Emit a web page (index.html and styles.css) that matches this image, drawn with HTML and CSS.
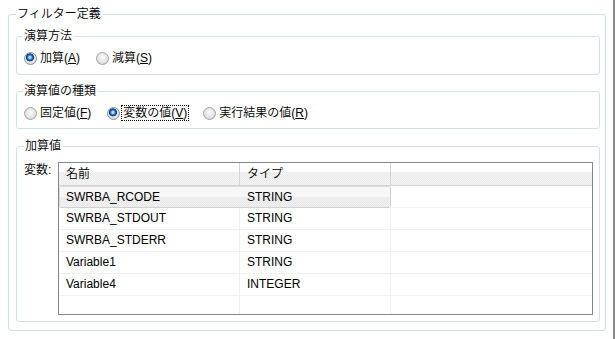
FILE: index.html
```html
<!DOCTYPE html>
<html>
<head>
  <meta charset="utf-8">
  <link rel="stylesheet" href="styles.css">
</head>
<body>
  <div class="window">
    <fieldset class="group outer">
      <legend>フィルター定義</legend>

      <fieldset class="group sub method">
        <legend>演算方法</legend>
        <div class="options">
          <label class="opt"><span class="dot on"></span><span class="text">加算(<u>A</u>)</span></label>
          <label class="opt"><span class="dot"></span><span class="text">減算(<u>S</u>)</span></label>
        </div>
      </fieldset>

      <fieldset class="group sub kind">
        <legend>演算値の種類</legend>
        <div class="options">
          <label class="opt"><span class="dot"></span><span class="text">固定値(<u>F</u>)</span></label>
          <label class="opt"><span class="dot on"></span><span class="text focus">変数の値(<u>V</u>)</span></label>
          <label class="opt"><span class="dot"></span><span class="text">実行結果の値(<u>R</u>)</span></label>
        </div>
      </fieldset>

      <fieldset class="group sub value">
        <legend>加算値</legend>
        <div class="var-row">
          <span class="var-label">変数:</span>
          <div class="list">
            <div class="row head">
              <div class="cell">名前</div>
              <div class="cell">タイプ</div>
              <div class="cell"></div>
            </div>
            <div class="row selected">
              <div class="cell first">SWRBA_RCODE</div>
              <div class="cell second">STRING</div>
              <div class="cell"></div>
            </div>
            <div class="row">
              <div class="cell">SWRBA_STDOUT</div>
              <div class="cell">STRING</div>
              <div class="cell"></div>
            </div>
            <div class="row">
              <div class="cell">SWRBA_STDERR</div>
              <div class="cell">STRING</div>
              <div class="cell"></div>
            </div>
            <div class="row">
              <div class="cell">Variable1</div>
              <div class="cell">STRING</div>
              <div class="cell"></div>
            </div>
            <div class="row">
              <div class="cell">Variable4</div>
              <div class="cell">INTEGER</div>
              <div class="cell"></div>
            </div>
            <div class="row filler">
              <div class="cell"></div>
              <div class="cell"></div>
              <div class="cell"></div>
            </div>
          </div>
        </div>
      </fieldset>
    </fieldset>
  </div>
</body>
</html>
```

FILE: styles.css
```css
body {
  margin: 0;
  background: #fff;
  color: #000;
  font: 350 12px/14px "Liberation Sans", "Noto Sans CJK JP", sans-serif;
}
.window {
  width: 615px;
  height: 339px;
  box-sizing: border-box;
  padding: 7px 0 0 8px;
  border-right: 2px solid #8a8a8a;
}
fieldset.group {
  margin: 0;
  min-width: 0;
  border: 1px solid #d5dfe5;
  border-radius: 3px;
  box-sizing: border-box;
}
fieldset.group legend {
  padding: 0 2px 0 1px;
  line-height: 14px;
}
.outer {
  width: 598px;
  padding: 0 5px 8px 7px;
}
.sub {
  padding: 0 6px 0 6px;
}
.method {
  margin-top: 8px !important;
  padding-top: 7px;
  padding-bottom: 8px;
}
.kind {
  margin-top: 9px !important;
  padding-top: 7px;
  padding-bottom: 7px;
}
.value {
  margin-top: 10px !important;
  padding: 9px 6px 6px 7px;
}

/* radio rows */
.options {
  display: flex;
  align-items: center;
  padding-left: 1px;
}
.opt {
  display: flex;
  align-items: center;
  gap: 1px;
  margin-right: 14px;
}
.text {
  padding: 0 1px;
  border: 1px dotted transparent;
}
.text.focus {
  border-color: #000;
}
.dot {
  width: 13px;
  height: 13px;
  box-sizing: border-box;
  border-radius: 50%;
  border: 1px solid #a3a3a3;
  background: radial-gradient(circle at 50% 40%, #fbfbfb, #e2e2e2 60%, #cdcdcd);
}
.dot.on {
  border-color: #8a8f96;
  background:
    radial-gradient(circle at 45% 40%, #b6e2ff 0 1px, #3a8be0 2px, #1254b4 3px, #0d3a7c 3.8px, transparent 4.3px),
    radial-gradient(circle at 50% 40%, #fbfbfb, #e2e2e2 60%, #cdcdcd);
}

/* variable list */
.var-row {
  display: flex;
  align-items: flex-start;
}
.var-label {
  width: 34px;
  margin-top: 1px;
}
.list {
  width: 535px;
  height: 153px;
  box-sizing: border-box;
  border: 1px solid #828790;
  display: flex;
  flex-direction: column;
}
.row {
  display: grid;
  grid-template-columns: 181px 151px 1fr;
  height: 22px;
}
.cell {
  box-sizing: border-box;
  padding-left: 7px;
  line-height: 21px;
  white-space: nowrap;
  border-right: 1px solid #f0f0f0;
  border-bottom: 1px solid #f0f0f0;
}
.row .cell:last-child {
  border-right: none;
}
.head {
  height: 23px;
}
.head .cell {
  line-height: 22px;
  border-right: 1px solid #d5d5d5;
  border-bottom: 1px solid #d5d5d5;
  background:
    linear-gradient(#fff 0 9px, transparent 9px),
    repeating-conic-gradient(#e9e9e9 0 25%, #f6f6f6 0 50%) 0 0 / 2px 2px;
}
.selected .first,
.selected .second {
  border-top: 1px solid #dadada;
  border-bottom: 1px solid #d0d0d0;
  line-height: 20px;
  background:
    linear-gradient(#f7f7f7 0 10px, transparent 10px),
    repeating-conic-gradient(#e6e6e6 0 25%, #f3f3f3 0 50%) 0 0 / 2px 2px;
}
.selected .first {
  border-left: 1px solid #dadada;
  border-right: none;
  border-radius: 2px 0 0 2px;
  padding-left: 6px;
}
.selected .second {
  border-right: 1px solid #cfcfcf;
  border-radius: 0 2px 2px 0;
}
.filler {
  flex: 1;
}
.filler .cell {
  border-bottom: none;
}
```
